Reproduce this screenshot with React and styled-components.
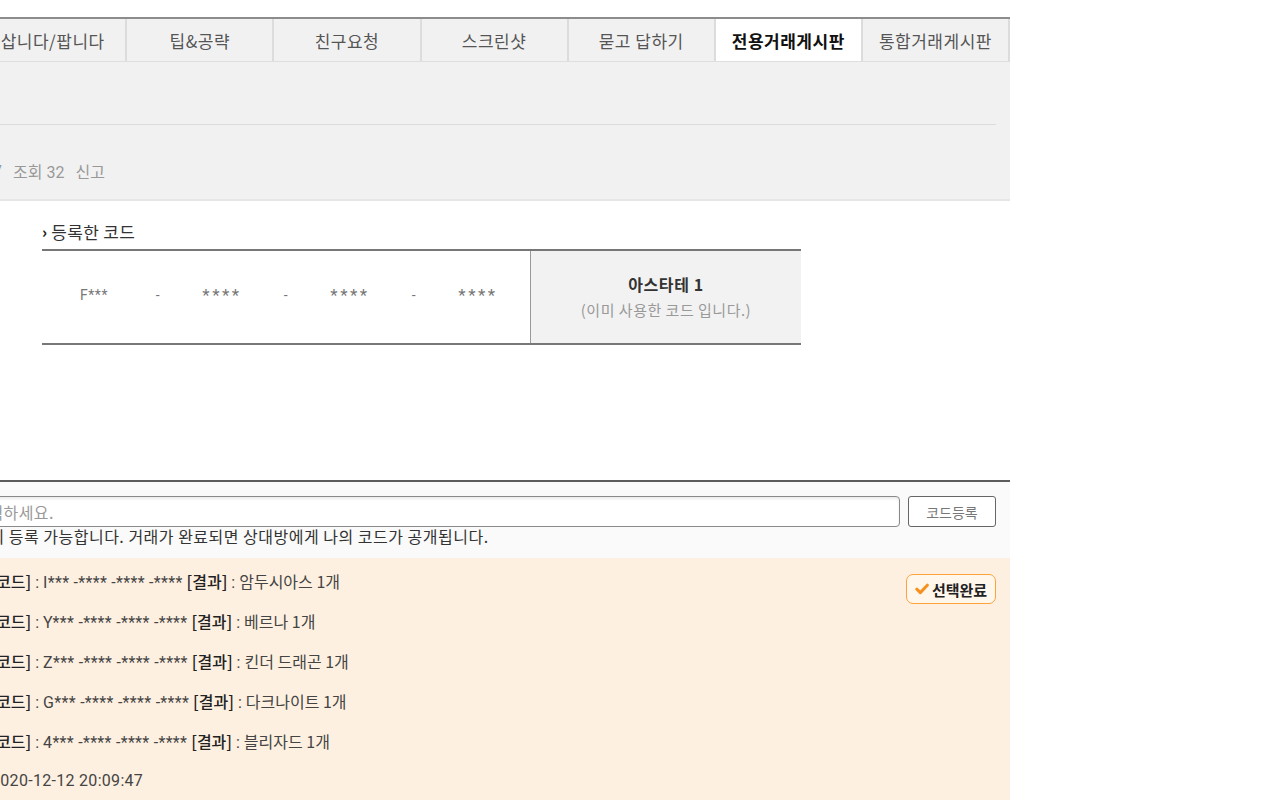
import React from "react";
import styled, { createGlobalStyle } from "styled-components";

const GlobalStyle = createGlobalStyle`
  html, body {
    margin: 0;
    padding: 0;
    background: #ffffff;
    overflow-x: hidden;
  }
  body {
    font-family: Roboto, "Noto Sans CJK KR", sans-serif;
    color: #333;
  }
`;

const Page = styled.div`
  width: 1177px;
  margin-left: -167px;
  padding-top: 17px;
`;

/* board tabs */
const TabBar = styled.div`
  display: flex;
  border-top: 2px solid #8c8c8c;
  border-bottom: 1px solid #dedede;
  background: #f1f1f1;
`;
const Tab = styled.div`
  flex: 1;
  height: 42px;
  display: flex;
  align-items: center;
  justify-content: center;
  border-right: 2px solid #dcdcdc;
  background: ${(props) => (props.active ? "#ffffff" : "#f1f1f1")};
  color: ${(props) => (props.active ? "#111" : "#555")};
  font-family: "Noto Sans CJK KR", sans-serif;
  font-size: 17px;
  letter-spacing: 0.5px;
  font-weight: ${(props) => (props.active ? 700 : 400)};
`;

/* post header */
const PostHead = styled.div`
  background: #f1f1f1;
  border-bottom: 2px solid #e6e6e6;
`;
const TitleRow = styled.div`
  height: 62px;
  margin: 0 14px;
  border-bottom: 1px solid #dcdcdc;
  display: flex;
  align-items: center;
  font-family: "Noto Sans CJK KR", sans-serif;
  font-size: 18px;
  color: #222;
`;
const MetaRow = styled.div`
  height: 74px;
  padding: 18px 14px 0 23px;
  box-sizing: border-box;
  display: flex;
  align-items: center;
  gap: 11px;
  font-size: 16px;
  color: #999;
`;
const Meta = styled.span``;

/* registered code */
const CodeSection = styled.div`
  width: 759px;
  margin: 0 auto;
  padding-top: 20px;
`;
const SectionLabel = styled.div`
  font-family: "Noto Sans CJK KR", sans-serif;
  font-size: 17px;
  letter-spacing: 0.3px;
  line-height: 22px;
  color: #333;
  margin-bottom: 6px;
  display: flex;
  align-items: center;
  gap: 4px;
`;
const Chevron = styled.span`
  font-weight: 900;
  font-size: 15px;
  color: #222;
`;
const CodeTable = styled.div`
  display: flex;
  height: 92px;
  border-top: 2px solid #777;
  border-bottom: 2px solid #777;
`;
const CodeCell = styled.div`
  flex: 1;
  display: flex;
  align-items: center;
  justify-content: center;
  padding-bottom: 4px;
  box-sizing: border-box;
`;
const CodePart = styled.span`
  width: 64px;
  text-align: center;
  font-size: ${(props) => (props.masked ? "17px" : "14px")};
  letter-spacing: ${(props) => (props.masked ? "2.5px" : "0.5px")};
  color: #777;
`;
const ResultCell = styled.div`
  width: 270px;
  border-left: 1px solid #9a9a9a;
  background: #f2f2f2;
  display: flex;
  flex-direction: column;
  align-items: center;
  justify-content: center;
  font-family: "Noto Sans CJK KR", sans-serif;
  line-height: 25px;
`;
const ResultName = styled.div`
  font-size: 16px;
  font-weight: 700;
  color: #333;
  letter-spacing: 0.6px;
`;
const ResultNote = styled.div`
  font-size: 15px;
  color: #999;
  letter-spacing: 0.5px;
`;

/* code trade area */
const TradeBox = styled.div`
  margin-top: 135px;
  border-top: 2px solid #5c5c5c;
`;
const FormArea = styled.div`
  background: #fafafa;
  padding: 14px 14px 13px 82px;
`;
const FormRow = styled.div`
  display: flex;
  gap: 8px;
`;
const CodeInput = styled.input`
  flex: 1;
  height: 31px;
  box-sizing: border-box;
  border: 1px solid #8a8a8a;
  border-radius: 4px;
  box-shadow: inset 0 2px 3px rgba(0, 0, 0, 0.08);
  background: #fff;
  padding: 0 8px;
  font-family: "Noto Sans CJK KR", sans-serif;
  font-size: 16px;
  letter-spacing: 0.4px;
  outline: none;
  &::placeholder {
    color: #999;
  }
`;
const RegisterButton = styled.button`
  width: 88px;
  height: 31px;
  border: 1px solid #666;
  border-radius: 3px;
  background: #fff;
  color: #777;
  font-family: "Noto Sans CJK KR", sans-serif;
  font-size: 14px;
  padding: 0;
`;
const Notice = styled.div`
  font-family: "Noto Sans CJK KR", sans-serif;
  font-size: 16px;
  line-height: 18px;
  color: #333;
  letter-spacing: 0.5px;
  text-indent: -4px;
`;

const OfferArea = styled.div`
  background: #fef0e1;
  padding: 3px 14px 0 128px;
  display: flex;
  align-items: flex-start;
`;
const OfferList = styled.div`
  flex: 1;
`;
const OfferRow = styled.div`
  height: 40px;
  line-height: 40px;
  font-size: 16px;
  color: #444;
  white-space: nowrap;
  padding-left: ${(props) => props.indent || 0}px;
  letter-spacing: ${(props) => (props.indent ? "0.3px" : "0")};
`;
const Tag = styled.b`
  font-family: "Noto Sans CJK KR", sans-serif;
  font-weight: 500;
  color: #222;
`;
const Masked = styled.span`
  letter-spacing: 0.3px;
`;
const Kor = styled.span`
  font-family: "Noto Sans CJK KR", sans-serif;
`;
const DoneBadge = styled.div`
  margin-top: 13px;
  width: 90px;
  height: 30px;
  box-sizing: border-box;
  border: 1.5px solid #ffa23a;
  border-radius: 7px;
  background: #fff6ec;
  display: flex;
  align-items: center;
  justify-content: center;
  gap: 3px;
  font-family: "Noto Sans CJK KR", sans-serif;
  font-size: 15px;
  font-weight: 700;
  color: #222;
`;

const CheckIcon = () => (
  <svg width="14" height="12" viewBox="0 0 14 12">
    <path
      d="M1.8 6.2 L5.3 9.6 L12.3 2.2"
      fill="none"
      stroke="#f7901e"
      strokeWidth="3"
      strokeLinecap="round"
      strokeLinejoin="round"
    />
  </svg>
);

const tabs = [
  "자유게시판",
  "삽니다/팝니다",
  "팁&공략",
  "친구요청",
  "스크린샷",
  "묻고 답하기",
  "전용거래게시판",
  "통합거래게시판",
];

const offers = [
  { code: "I*** -**** -**** -****", item: "암두시아스 1개" },
  { code: "Y*** -**** -**** -****", item: "베르나 1개" },
  { code: "Z*** -**** -**** -****", item: "킨더 드래곤 1개" },
  { code: "G*** -**** -**** -****", item: "다크나이트 1개" },
  { code: "4*** -**** -**** -****", item: "블리자드 1개" },
];

const codeParts = ["F***", "-", "****", "-", "****", "-", "****"];

const App = () => {
  return (
    <>
      <GlobalStyle />
      <Page>
        <TabBar>
          {tabs.map((t) => (
            <Tab key={t} active={t === "전용거래게시판"}>
              {t}
            </Tab>
          ))}
        </TabBar>

        <PostHead>
          <TitleRow>코드 교환</TitleRow>
          <MetaRow>
            <Meta>2020.12.12 20:09:47</Meta>
            <Meta>조회 32</Meta>
            <Meta>신고</Meta>
          </MetaRow>
        </PostHead>

        <CodeSection>
          <SectionLabel>
            <Chevron>›</Chevron>등록한 코드
          </SectionLabel>
          <CodeTable>
            <CodeCell>
              {codeParts.map((p, i) => (
                <CodePart key={i} masked={p === "****"}>
                  {p}
                </CodePart>
              ))}
            </CodeCell>
            <ResultCell>
              <ResultName>아스타테 1</ResultName>
              <ResultNote>(이미 사용한 코드 입니다.)</ResultNote>
            </ResultCell>
          </CodeTable>
        </CodeSection>

        <TradeBox>
          <FormArea>
            <FormRow>
              <CodeInput placeholder="코드를 입력하세요." />
              <RegisterButton>코드등록</RegisterButton>
            </FormRow>
            <Notice>
              코드는 총 1회 등록 가능합니다. 거래가 완료되면 상대방에게 나의
              코드가 공개됩니다.
            </Notice>
          </FormArea>
          <OfferArea>
            <OfferList>
              {offers.map((o) => (
                <OfferRow key={o.code}>
                  <Tag>[등록코드]</Tag> : <Masked>{o.code}</Masked>{" "}
                  <Tag>[결과]</Tag> : <Kor>{o.item}</Kor>
                </OfferRow>
              ))}
              <OfferRow indent={30}>2020-12-12 20:09:47</OfferRow>
            </OfferList>
            <DoneBadge>
              <CheckIcon />
              선택완료
            </DoneBadge>
          </OfferArea>
        </TradeBox>
      </Page>
    </>
  );
};

export default App;
